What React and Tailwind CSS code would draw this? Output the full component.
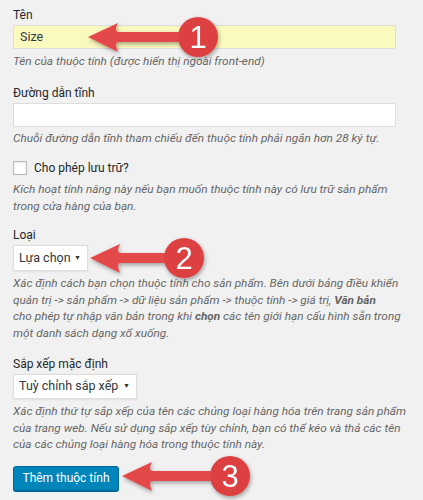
import React from "react";

const font = { fontFamily: 'Roboto, "Noto Sans", sans-serif' };

function Arrow({ tx, ty, bx, cx, n }) {
  return (
    <g filter="url(#shadow)">
      <path d={`M${tx} ${ty} L${bx} ${ty - 14} Q${bx - 4} ${ty - 6} ${bx} ${ty - 5} L${cx} ${ty - 5} L${cx} ${ty + 5} L${bx} ${ty + 5} Q${bx - 4} ${ty + 6} ${bx} ${ty + 15} Z`} fill="#e44a4a" />
      <circle cx={cx} cy={ty} r="20" fill="#dc4141" />
      <text x={cx} y={ty + 11} textAnchor="middle" fill="#fff" fontSize="31" fontFamily="Liberation Sans, Arial, sans-serif">{n}</text>
    </g>
  );
}

function Help({ children, className = "" }) {
  return <p className={`italic text-[11.8px] leading-[16.5px] text-[#666] whitespace-nowrap ${className}`}>{children}</p>;
}

function Select({ label, w, h = "h-[26px]" }) {
  return (
    <div className={`flex items-center justify-between whitespace-nowrap ${h} bg-white border border-[#ddd] shadow-[0_1px_2px_rgba(0,0,0,0.07)] pl-[5px] pr-[6px] text-[12.5px] text-[#32373c] ${w}`}>
      <span>{label}</span>
      <span className="text-[7px] text-[#333]">▼</span>
    </div>
  );
}

export default function App() {
  return (
    <div className="relative w-[423px] h-[500px] bg-[#f1f1f1] overflow-hidden text-[#23282d]" style={font}>
      <div className="pl-[13px] pr-[27px] pt-[6px]">
        <div className="text-[12px] leading-[18px]">Tên</div>
        <div className="mt-[1px] h-[24px] bg-[#fafabf] border border-[#ddd] flex items-center pl-[6px] text-[12.5px] text-[#32373c]">Size</div>
        <Help className="mt-[4px]">Tên của thuộc tính (được hiển thị ngoài front-end)</Help>

        <div className="mt-[14px] text-[12px] leading-[18px]">Đường dẫn tĩnh</div>
        <div className="mt-[1px] h-[24px] bg-white border border-[#ddd]"></div>
        <Help className="mt-[3px]">Chuỗi đường dẫn tĩnh tham chiếu đến thuộc tính phải ngắn hơn 28 ký tự.</Help>

        <div className="mt-[13px] flex items-center gap-[7px]">
          <div className="w-[14px] h-[14px] bg-white border border-[#b4b9be] shadow-[inset_0_1px_2px_rgba(0,0,0,0.1)]"></div>
          <span className="text-[12px] leading-[18px]">Cho phép lưu trữ?</span>
        </div>
        <Help className="mt-[4px]">
          Kích hoạt tính năng này nếu bạn muốn thuộc tính này có lưu trữ sản phẩm<br />trong cửa hàng của bạn.
        </Help>

        <div className="mt-[12px] text-[12px] leading-[18px]">Loại</div>
        <div className="mt-[1px]"><Select label="Lựa chọn" w="w-[75px]" /></div>
        <Help className="mt-[4px]">
          Xác định cách bạn chọn thuộc tính cho sản phẩm. Bên dưới bảng điều khiển<br />
          quản trị -&gt; sản phẩm -&gt; dữ liệu sản phẩm -&gt; thuộc tính -&gt; giá trị, <b>Văn bản</b><br />
          cho phép tự nhập văn bản trong khi <b>chọn</b> các tên giới hạn cấu hình sẵn trong<br />
          một danh sách dạng xổ xuống.
        </Help>

        <div className="mt-[14px] text-[12px] leading-[18px]">Sắp xếp mặc định</div>
        <div className="mt-[1px]"><Select label="Tuỳ chỉnh sắp xếp" w="w-[124px]" h="h-[25px]" /></div>
        <Help className="mt-[4px]">
          Xác định thứ tự sắp xếp của tên các chủng loại hàng hóa trên trang sản phẩm<br />
          của trang web. Nếu sử dụng sắp xếp tùy chỉnh, bạn có thể kéo và thả các tên<br />
          của các chủng loại hàng hóa trong thuộc tính này.
        </Help>

        <button className="mt-[13px] h-[25px] w-[106px] bg-[#0085ba] border border-[#006799] rounded-[3px] text-white text-[12px] shadow-[0_1px_0_#006799]">Thêm thuộc tính</button>
      </div>

      <svg className="absolute inset-0 pointer-events-none" width="423" height="500">
        <defs>
          <filter id="shadow" x="-20%" y="-40%" width="140%" height="180%">
            <feDropShadow dx="1" dy="2" stdDeviation="2" floodColor="#000" floodOpacity="0.35" />
          </filter>
        </defs>
        <Arrow tx={88} ty={37} bx={118} cx={198} n="1" />
        <Arrow tx={90} ty={258} bx={120} cx={184} n="2" />
        <Arrow tx={122} ty={476} bx={152} cx={230} n="3" />
      </svg>
    </div>
  );
}
